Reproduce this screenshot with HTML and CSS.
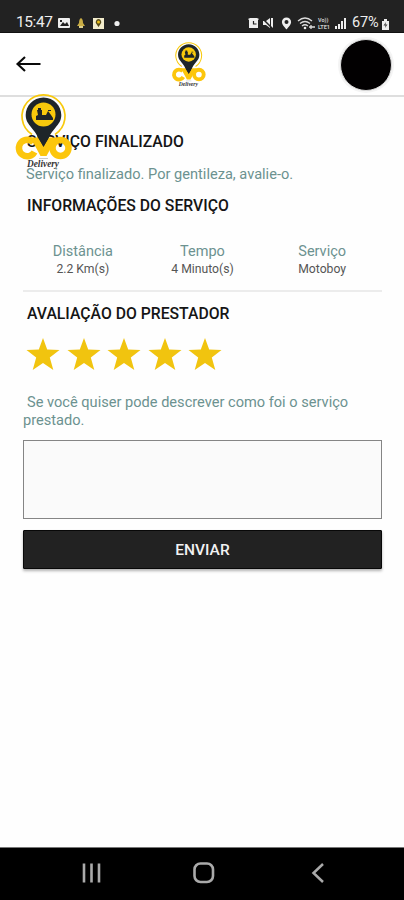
FILE: index.html
```
<!DOCTYPE html>
<html lang="pt-BR">
<head>
<meta charset="utf-8">
<title>Serviço finalizado</title>
<link rel="stylesheet" href="styles.css">
</head>
<body>
<svg class="defs" width="0" height="0">
  <symbol id="logo" viewBox="0 0 60 80">
    <path d="M18 42.500A21.500 21.500 0 1 1 41 42.500" fill="none" stroke="#f8c90c" stroke-width="1.700"/>
    <path d="M29.500 5.500C19 5.500 11.700 14 11.700 23c0 11 10.300 13 14.300 28l3.500 4 3.500-4c4-15 14.300-17 14.300-28C47.300 14 40 5.500 29.500 5.500Z" fill="#1e2529"/>
    <circle cx="29.500" cy="22.500" r="12" fill="#f8c90c"/>
    <path d="M23 18h5v5h4l2-4 3 4 2 3v2H22v-4l2-1Z" fill="#1e2529"/>
    <path d="M24 16h3v3h-3ZM34 18h3v1h-3Z" fill="#1e2529"/>
    <path d="M19.500 50.500A8.300 8.300 0 1 0 20.500 60" fill="none" stroke="#fcc60c" stroke-width="6.500"/>
    <circle cx="46.500" cy="56" r="8" fill="none" stroke="#fcc60c" stroke-width="6.500"/>
    <path d="M16.500 45.500h7.500l5.500 9 5.500-9h7.500L32.500 64h-6Z" fill="#fcc60c"/>
    <path d="M24 45h11l-5.500 10Z" fill="#1e2529"/>
    <path d="M25 66.500h9" stroke="#bbb" stroke-width=".8"/>
    <text class="script" x="13" y="75" textLength="32" lengthAdjust="spacingAndGlyphs">Delivery</text>
  </symbol>
  <symbol id="star" viewBox="0 0 34 33">
    <path d="m17 0 4.200 11.500L33.500 12l-9.700 7.600L27.300 32 17 24.900 6.700 32l3.500-12.400L.5 12l12.300-.5Z" fill="#f1c40f"/>
  </symbol>
</svg>
<div class="screen">
  <div class="status">
    <span class="time">15:47</span>
    <svg class="notices" width="66" height="16" viewBox="0 0 66 16">
      <rect x="1" y="3" width="12" height="10" rx="1" fill="#eee"/>
      <path d="m3 11 3-4 2 2 2-2 2 4ZM3 5h2v2H3Z" fill="#222"/>
      <path d="M24 3q2 1 2 5l2 3h-8l2-3q0-4 2-5Z" fill="#c9ad45"/><path d="M22 11h4v2h-4Z" fill="#ddd08f"/>
      <rect x="36" y="3" width="11" height="11" fill="#f3edcd"/>
      <path d="M41.500 4a3 3 0 0 1 2 5l-2 3-2-3a3 3 0 0 1 2-5Z" fill="#554a18"/><circle cx="41.500" cy="7" r="1.500" fill="#eabf19"/>
      <circle cx="60" cy="8.500" r="2.600" fill="#eee"/>
    </svg>
    <svg class="signals" width="104" height="16" viewBox="0 0 104 16">
      <g fill="#eee">
        <path d="m1 4 2-1h7l2 1-1 1v8H2V5Z"/>
        <path d="M16 6h3l4-3v10l-4-3h-3ZM24 3h2v10h-2Z"/>
        <path d="M39.500 2.500a4.600 4.600 0 0 1 4.600 4.600c0 3-4.600 7.400-4.600 7.400s-4.600-4.400-4.600-7.400a4.600 4.600 0 0 1 4.600-4.600Z"/>
        <path d="M88 11h2v3h-2ZM91 9h2v5h-2ZM94 6h2v8h-2ZM97 3h2v11h-2Z"/>
      </g>
      <path d="m15 3 11 11" stroke="#222" stroke-width="1.500"/>
      <path d="M6.500 6v3h3" fill="none" stroke="#222" stroke-width="1.200"/>
      <circle cx="39.500" cy="7" r="2" fill="#222"/>
      <g fill="none" stroke="#ddd" stroke-width="1.300"><path d="M51 6q7-6 14 0M53 8.500q5-4 10 0M55 11q3-2.500 6 0M62 12h6M64 10v4"/></g>
      <circle cx="58" cy="13" r="1.300" fill="#eee"/>
      <text class="volte" x="71" y="7">Vo))</text><text class="volte" x="71" y="14">LTE1</text>
    </svg>
    <span class="percent">67%</span>
    <svg class="battery" width="9" height="14" viewBox="0 0 9 14"><path d="M3 2h3v2h2v9H1V4h2Z" fill="#eee"/><path d="m5 5-2.500 3.500h2L4 11l2.500-3.500h-2Z" fill="#444"/></svg>
  </div>
  <header class="appbar">
    <svg class="back" width="28" height="20" viewBox="0 0 28 20"><path d="M25.500 10H3M10 3 2.500 10l7.500 7" fill="none" stroke="#0a0a0a" stroke-width="2.100"/></svg>
    <svg class="brand" width="36" height="48"><use href="#logo"/></svg>
    <div class="avatar"></div>
  </header>
  <main class="content">
    <h2 class="first"><span>SERVIÇO FINALIZADO</span></h2>
    <p class="lead">Serviço finalizado. Por gentileza, avalie-o.</p>
    <h2 class="info">INFORMAÇÕES DO SERVIÇO</h2>
    <div class="facts">
      <div><span class="label">Distância</span><span class="value">2.2 Km(s)</span></div>
      <div><span class="label">Tempo</span><span class="value">4 Minuto(s)</span></div>
      <div><span class="label">Serviço</span><span class="value">Motoboy</span></div>
    </div>
    <h2 class="rate">AVALIAÇÃO DO PRESTADOR</h2>
    <div class="stars">
      <svg><use href="#star"/></svg><svg><use href="#star"/></svg><svg><use href="#star"/></svg><svg><use href="#star"/></svg><svg><use href="#star"/></svg>
    </div>
    <p class="hint">Se você quiser pode descrever como foi o serviço prestado.</p>
    <textarea class="comment"></textarea>
    <button class="send">ENVIAR</button>
  </main>
  <nav class="navbar">
    <svg width="20" height="22" viewBox="0 0 20 22"><path d="M2 1.500v19M9.500 1.500v19M17 1.500v19" stroke="#aaa" stroke-width="2.600"/></svg>
    <svg width="22" height="22" viewBox="0 0 22 22"><rect x="1.500" y="1.500" width="18.500" height="18.500" rx="6" fill="none" stroke="#aaa" stroke-width="2.600"/></svg>
    <svg width="14" height="22" viewBox="0 0 14 22"><path d="M12 2 2.500 11l9.500 9" fill="none" stroke="#aaa" stroke-width="2.500"/></svg>
  </nav>
  <svg class="floating" width="60" height="80"><use href="#logo"/></svg>
</div>
</body>
</html>
```
FILE: styles.css
```
* { box-sizing: border-box; }
body { margin: 0; font-family: Roboto, "Liberation Sans", sans-serif; background: #fff; }
.defs { position: absolute; }
.screen { position: relative; width: 404px; height: 900px; display: flex; flex-direction: column; overflow: hidden; background: #fefefe; }
.status { height: 33px; flex: none; background: #222; border-bottom: 1px solid #111; display: flex; align-items: flex-end; padding: 0 14px 1px 16px; color: #eee; }
.status svg { flex: none; }
.time { font-size: 15.500px; line-height: 17px; width: 41px; letter-spacing: -.4px; }
.signals { margin-left: 124px; }
.percent { font-size: 14.500px; line-height: 17px; width: 29px; margin-left: 1px; letter-spacing: -.1px; }
.volte { font: bold 5.500px Roboto, sans-serif; fill: #ccc; }
.script { font: italic bold 11px "Liberation Serif", serif; fill: #333; }
.appbar { height: 64px; flex: none; background: #fff; border-bottom: 2px solid #dedede; display: grid; grid-template-columns: 156px 64px 1fr; padding: 0 12px 0 15px; align-items: center; }
.brand { margin-top: 1px; }
.avatar { justify-self: end; width: 52px; height: 52px; margin-top: 2px; border-radius: 50%; background: #020001; border: 1px solid #ddd; box-shadow: 0 0 0 2px #f4f4f4; }
.content { flex: 1; display: flex; flex-direction: column; padding: 35px 22px 0 23px; }
h2 { margin: 0; padding-left: 4px; font-size: 15.750px; line-height: 20px; font-weight: 500; color: #151515; white-space: nowrap; }
.lead, .hint { margin: 0; font-size: 14.600px; color: #6c9290; }
.lead { margin-top: 13px; padding-left: 3px; line-height: 18px; }
.info { margin-top: 13px; }
.facts { margin-top: 27px; height: 49px; border-bottom: 2px solid #ececec; display: grid; grid-template-columns: repeat(3, 1fr); text-align: center; }
.facts span { display: block; }
.label { font-size: 14.500px; line-height: 18px; color: #6c9290; }
.value { font-size: 12.200px; line-height: 17px; color: #555; }
.rate { margin-top: 12px; }
.stars { display: flex; gap: 6.500px; padding-left: 3px; margin-top: 14px; }
.stars svg { width: 34px; height: 33px; }
.hint { margin-top: 23px; line-height: 17.500px; text-indent: 4px; width: 340px; }
.comment { margin: 11px 0 0; height: 79px; flex: none; border: 1px solid #858585; border-radius: 0; background: #fafafa; resize: none; }
.send { margin-top: 11px; height: 39px; flex: none; padding-top: 2px; border: 1px solid #080808; border-radius: 1px; background: #222; color: #f2f2f2; font: 500 15.500px Roboto, sans-serif; box-shadow: 0 2px 3px rgba(0,0,0,.3); }
.navbar { height: 53px; flex: none; background: #000; border-top: 1px solid #777; display: grid; grid-template-columns: 111px 118px 14px; align-items: center; padding: 0 0 2px 82px; }
.floating { position: absolute; left: 14px; top: 92px; }
```
